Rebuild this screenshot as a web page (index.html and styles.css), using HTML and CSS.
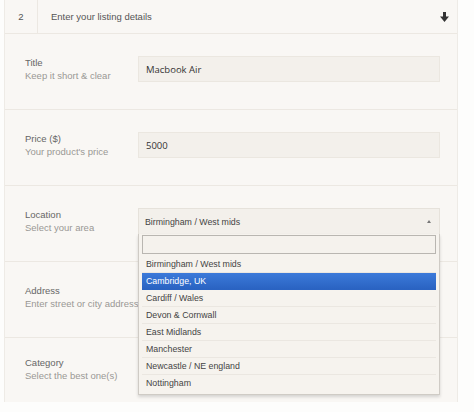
FILE: index.html
```html
<!DOCTYPE html>
<html lang="en">
<head>
    <meta charset="UTF-8">
    <title>Enter your listing details</title>
    <link rel="stylesheet" href="styles.css">
</head>
<body>

    <div class="panel">
        <!-- Step header -->
        <div class="step-header">
            <div class="step-num">2</div>
            <div class="step-title">Enter your listing details</div>
            <svg class="step-arrow" width="9" height="10" viewBox="0 0 9 10">
                <rect x="3" y="0" width="3" height="5" fill="#333"/>
                <polygon points="0,4.5 9,4.5 4.5,10" fill="#333"/>
            </svg>
        </div>

        <div class="row">
            <div class="label">
                <div class="label-name">Title</div>
                <div class="label-hint">Keep it short &amp; clear</div>
            </div>
            <div class="field">
                <input class="text-input" type="text" value="Macbook Air">
            </div>
        </div>

        <div class="row">
            <div class="label">
                <div class="label-name">Price ($)</div>
                <div class="label-hint">Your product's price</div>
            </div>
            <div class="field">
                <input class="text-input" type="text" value="5000">
            </div>
        </div>

        <div class="row">
            <div class="label">
                <div class="label-name">Location</div>
                <div class="label-hint">Select your area</div>
            </div>
            <div class="field">
                <div class="select open">
                    <span>Birmingham / West mids</span>
                    <span class="caret"></span>
                </div>
                <!-- Open dropdown lies over the rows below -->
                <div class="dropdown">
                    <div class="search"><input type="text"></div>
                    <ul class="options">
                        <li>Birmingham / West mids</li>
                        <li class="active">Cambridge, UK</li>
                        <li>Cardiff / Wales</li>
                        <li>Devon &amp; Cornwall</li>
                        <li>East Midlands</li>
                        <li>Manchester</li>
                        <li>Newcastle / NE england</li>
                        <li>Nottingham</li>
                    </ul>
                </div>
            </div>
        </div>

        <div class="row">
            <div class="label">
                <div class="label-name">Address</div>
                <div class="label-hint">Enter street or city address</div>
            </div>
            <div class="field"></div>
        </div>

        <div class="row last">
            <div class="label">
                <div class="label-name">Category</div>
                <div class="label-hint">Select the best one(s)</div>
            </div>
            <div class="field"></div>
        </div>
    </div>

</body>
</html>
```

FILE: styles.css
```css
body {
    margin: 0;
    background-color: #fdfdfc;
    font-family: "Liberation Sans", Arial, sans-serif;
    font-size: 9.5px;
}

.panel {
    width: 452px;
    margin-left: 4px;
    background-color: #f9f7f4;
    border-left: 1px solid #eeebe6;
    border-right: 1px solid #eeebe6;
}

/* Header bar with step number */
.step-header {
    display: flex;
    align-items: center;
    height: 33px;
    border-bottom: 1px solid #ece8e2;
    color: #555;
}

.step-num {
    width: 32px;
    height: 33px;
    line-height: 33px;
    text-align: center;
    border-right: 1px solid #ece8e2;
}

.step-title {
    flex: 1;
    padding-left: 13px;
}

.step-arrow {
    margin-right: 8px;
    margin-top: 1px;
}

/* Form rows */
.row {
    display: grid;
    grid-template-columns: 113px 302px;
    align-items: center;
    height: 70px;
    padding-left: 20px;
    padding-bottom: 5px;
    border-bottom: 1px solid #ece8e2;
}

.row.last {
    height: 61px;
    padding-bottom: 3px;
    border-bottom: none;
}

.label {
    line-height: 13px;
    white-space: nowrap;
}

.label-name {
    color: #666;
}

.label-hint {
    color: #9a9894;
}

.field {
    position: relative;
    height: 26px;
}

.text-input {
    box-sizing: border-box;
    width: 302px;
    height: 26px;
    margin: 0;
    padding: 0 7px;
    border: 1px solid #ebe7e0;
    background-color: #f3f0eb;
    font-family: "Open Sans", sans-serif;
    font-size: 9.5px;
    color: #333;
    outline: none;
}

/* Select box, opened */
.select {
    box-sizing: border-box;
    display: flex;
    justify-content: space-between;
    align-items: center;
    height: 26px;
    padding: 0 6px 0 6px;
    border: 1px solid #e6e2db;
    border-bottom: none;
    background-color: #f3f0eb;
    color: #444;
    font-size: 8.8px;
}

.caret {
    width: 0;
    height: 0;
    border-left: 2.5px solid transparent;
    border-right: 2.5px solid transparent;
    border-bottom: 3px solid #777;
    margin-right: 2px;
}

.dropdown {
    position: absolute;
    top: 26px;
    left: 0;
    width: 302px;
    box-sizing: border-box;
    padding: 1px 3px 3px 3px;
    background-color: #f6f3ee;
    border: 1px solid #cfcbc5;
    border-top: none;
    box-shadow: 0 2px 3px rgba(0, 0, 0, 0.15);
    z-index: 2;
}

.search input {
    box-sizing: border-box;
    width: 100%;
    height: 19px;
    margin: 0;
    border: 1px solid #b9b6b1;
    background-color: #f5f2ed;
    outline: none;
}

.options {
    list-style: none;
    margin: 2px 0 0 0;
    padding: 0;
    font-size: 8.8px;
    color: #444;
}

.options li {
    height: 16px;
    line-height: 16px;
    padding-left: 4px;
    border-bottom: 1px solid #ebe7e1;
}

.options li:last-child {
    border-bottom: none;
}

.options li.active {
    color: #fff;
    background: linear-gradient(#3c7ada, #2a63c2);
    border-bottom-color: #2a63c2;
}
```
